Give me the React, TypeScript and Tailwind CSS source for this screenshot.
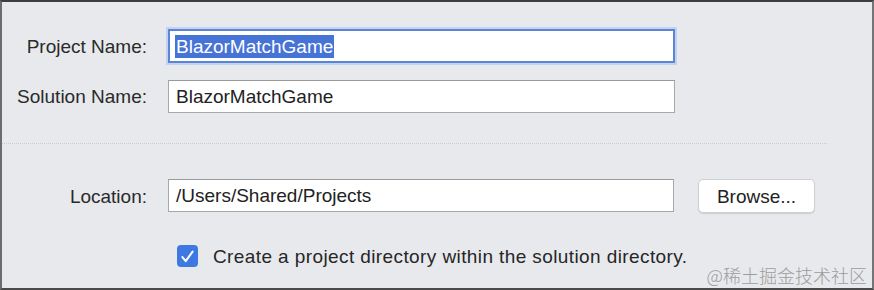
import React from 'react'

const font = { fontFamily: '"Liberation Sans", Arial, sans-serif' }

function Field({ label, value, focused }: { label: string; value: string; focused?: boolean }) {
  return (
    <div className="flex items-center">
      <div className="w-[145px] text-right text-[19px] text-[#2a2a2a] leading-none">{label}</div>
      <div
        className={
          focused
            ? 'ml-[21px] w-[507px] h-[34px] bg-white border-2 border-[#5b86d8] shadow-[0_0_0_2px_#c3d3ef] flex items-center pl-[5px]'
            : 'ml-[21px] w-[507px] h-[33px] bg-white border border-[#a8a8a8] border-t-[#9a9a9a] flex items-center pl-[7px]'
        }
      >
        {focused ? (
          <span className="bg-[#4673d6] text-white text-[19px] leading-[23px] px-[1px]">{value}</span>
        ) : (
          <span className="text-[19px] text-[#222] leading-none">{value}</span>
        )}
      </div>
    </div>
  )
}

export default function App() {
  return (
    <div
      className="relative w-[874px] h-[290px] bg-[#e8e9ed] border-t-2 border-t-[#3d3d3d] border-l-2 border-l-[#6c6c6c] border-r-2 border-r-[#757575] border-b-2 border-b-[#4a4a4a] flex flex-col"
      style={font}
    >
      {/* Nama project & solution */}
      <div className="flex flex-col gap-[17px] pt-[27px]">
        <Field label="Project Name:" value="BlazorMatchGame" focused />
        <Field label="Solution Name:" value="BlazorMatchGame" />
      </div>

      {/* Divider */}
      <div className="mt-[30px] w-[825px] border-t border-dotted border-[#c9cace]" />

      {/* Location row */}
      <div className="mt-[35px] flex items-start">
        <div className="w-[145px] h-[34px] flex items-center justify-end text-[19px] text-[#2a2a2a] leading-none">
          Location:
        </div>
        <div className="ml-[21px] w-[506px] h-[33px] bg-white border border-[#a8a8a8] border-t-[#9a9a9a] flex items-center pl-[7px]">
          <span className="text-[19px] text-[#222] leading-none">/Users/Shared/Projects</span>
        </div>
        <button className="ml-[24px] w-[117px] h-[34px] bg-white rounded-[5px] border border-[#d0d0d3] shadow-[0_1px_1px_rgba(0,0,0,0.12)] text-[19px] text-[#222] leading-none flex items-center justify-center">
          Browse...
        </button>
      </div>

      {/* Checkbox row */}
      <div className="mt-[32px] ml-[175px] flex items-center">
        <div className="w-[21px] h-[22px] rounded-[4px] bg-[#3d78e3] flex items-center justify-center">
          <svg className="w-[17px] h-[17px]" viewBox="0 0 16 16" fill="none" stroke="white" strokeWidth={1.9} strokeLinecap="round" strokeLinejoin="round">
            <path d="M3.2 8.6l3.1 3.8 6.5-9" />
          </svg>
        </div>
        <span className="ml-[15px] text-[19px] text-[#262626] leading-none tracking-[0.4px]">
          Create a project directory within the solution directory.
        </span>
      </div>

      {/* Watermark */}
      <div
        className="absolute right-[5px] bottom-[4px] text-[18px] text-[#9c9c9c] font-light leading-none"
        style={{ fontFamily: '"Noto Sans CJK SC", sans-serif' }}
      >
        @稀土掘金技术社区
      </div>
    </div>
  )
}
